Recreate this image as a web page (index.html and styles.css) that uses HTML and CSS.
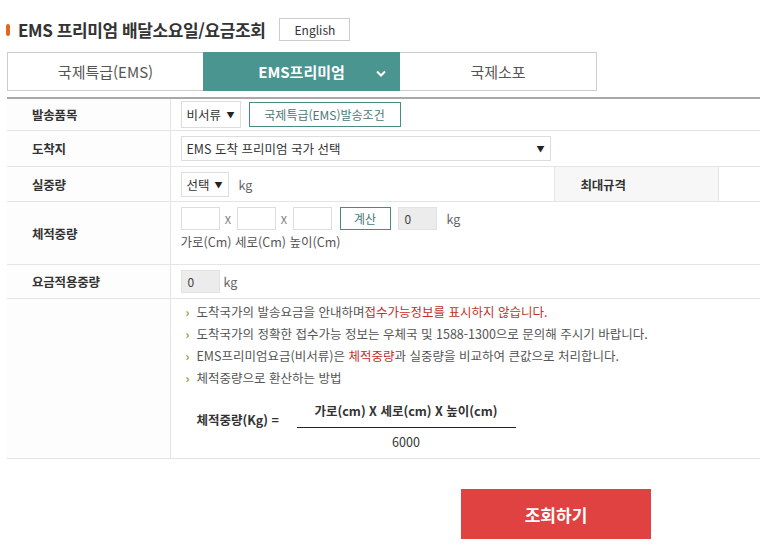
FILE: index.html
```html
<!DOCTYPE html>
<html lang="ko">
<head>
<meta charset="utf-8">
<title>EMS 프리미엄 배달소요일/요금조회</title>
<link rel="stylesheet" href="styles.css">
</head>
<body>
<header class="title-bar">
  <span class="bullet"></span>
  <h1>EMS 프리미엄 배달소요일/요금조회</h1>
  <button class="lang">English</button>
</header>
<nav class="tabs">
  <a class="tab tab-first">국제특급(EMS)</a>
  <a class="tab tab-active">EMS프리미엄
    <svg class="chev" width="10" height="7" viewBox="0 0 10 7"><polyline points="1,1.5 5,5.5 9,1.5" fill="none" stroke="#fff" stroke-width="2"/></svg>
  </a>
  <a class="tab tab-last">국제소포</a>
</nav>
<table class="calc">
  <colgroup><col class="c1"><col class="c2"><col class="c3"><col class="c4"></colgroup>
  <tr class="r1">
    <th>발송품목</th>
    <td colspan="3"><div class="inline">
      <span class="sel sel-doc">비서류 <i>▼</i></span>
      <button class="btn-outline btn-cond">국제특급(EMS)발송조건</button>
    </div></td>
  </tr>
  <tr class="r2">
    <th>도착지</th>
    <td colspan="3"><span class="sel sel-country">EMS 도착 프리미엄 국가 선택 <i>▼</i></span></td>
  </tr>
  <tr class="r3">
    <th>실중량</th>
    <td><div class="inline"><span class="sel sel-weight">선택 <i>▼</i></span><span class="unit">kg</span></div></td>
    <th class="sub">최대규격</th>
    <td class="blank"></td>
  </tr>
  <tr class="r4">
    <th>체적중량</th>
    <td colspan="3" class="dims-cell">
      <div class="inline dims">
        <span class="box"></span><span class="x">X</span>
        <span class="box"></span><span class="x">X</span>
        <span class="box"></span>
        <button class="btn-outline btn-calc">계산</button>
        <span class="box gray">0</span><span class="unit">kg</span>
      </div>
      <div class="dim-label">가로(Cm) 세로(Cm) 높이(Cm)</div>
    </td>
  </tr>
  <tr class="r5">
    <th>요금적용중량</th>
    <td colspan="3"><div class="inline"><span class="box gray">0</span><span class="unit unit-tight">kg</span></div></td>
  </tr>
  <tr class="r6">
    <th></th>
    <td colspan="3">
      <ul class="notes">
        <li>도착국가의 발송요금을 안내하며<em>접수가능정보를 표시하지 않습니다.</em></li>
        <li>도착국가의 정확한 접수가능 정보는 우체국 및 1588-1300으로 문의해 주시기 바랍니다.</li>
        <li>EMS프리미엄요금(비서류)은 <em>체적중량</em>과 실중량을 비교하여 큰값으로 처리합니다.</li>
        <li>체적중량으로 환산하는 방법</li>
      </ul>
      <div class="formula">
        <span class="f-left">체적중량(Kg) =</span>
        <div class="frac">
          <span class="num">가로(cm) X 세로(cm) X 높이(cm)</span>
          <span class="den">6000</span>
        </div>
      </div>
    </td>
  </tr>
</table>
<div class="actions">
  <button class="submit">조회하기</button>
</div>
</body>
</html>
```

FILE: styles.css
```css
html { overflow: hidden; }
body {
  margin: 0;
  font-family: "Noto Sans CJK KR", "Noto Sans", sans-serif;
  color: #555;
  font-size: 12px;
  background: #fff;
}
.title-bar {
  display: flex;
  align-items: center;
  padding: 18px 0 0 6px;
  height: 23px;
}
.bullet {
  width: 4px;
  height: 12px;
  border-radius: 2px;
  background: #e2681c;
  margin-right: 8px;
}
.title-bar h1 {
  margin: 0;
  font-size: 17px;
  font-weight: bold;
  color: #333;
  letter-spacing: -0.4px;
}
.lang {
  margin-left: 14px;
  width: 71px;
  height: 23px;
  border: 1px solid #ccc;
  background: #fff;
  font-family: inherit;
  font-size: 12px;
  color: #333;
  padding: 0;
}
.tabs {
  display: flex;
  margin: 11px 0 0 7px;
  width: 590px;
  height: 39px;
}
.tab {
  flex: 0 0 auto;
  display: flex;
  align-items: center;
  justify-content: center;
  box-sizing: border-box;
  height: 39px;
  font-size: 15px;
  color: #555;
  border-top: 1px solid #ccc;
  border-bottom: 1px solid #ccc;
}
.tab-first { width: 196px; border-left: 1px solid #ccc; }
.tab-last { width: 197px; border-right: 1px solid #ccc; }
.tab-active {
  width: 197px;
  background: #4a9590;
  border-color: #4a9590;
  color: #fff;
  font-weight: bold;
  position: relative;
}
.chev { position: absolute; right: 14px; top: 17px; }
.calc {
  margin: 6px 0 0 7px;
  width: 753px;
  border-collapse: collapse;
  table-layout: fixed;
  border-top: 2px solid #a8a8a8;
}
.c1 { width: 163px; }
.c2 { width: 384px; }
.c3 { width: 164px; }
.c4 { width: 42px; }
.calc th, .calc td {
  border-bottom: 1px solid #e4e4e4;
  padding: 0;
  vertical-align: middle;
}
.calc th {
  text-align: left;
  padding-left: 25px;
  font-size: 12.5px;
  font-weight: bold;
  color: #333;
  background: #fdfdfd;
  border-right: 1px solid #e4e4e4;
  letter-spacing: -0.2px;
}
.calc td { padding-left: 10px; }
.calc th.sub {
  background: #f7f7f7;
  border-left: 1px solid #e4e4e4;
  padding-left: 26px;
}
.calc td.blank { padding: 0; }
.r1 th, .r1 td { height: 31px; }
.r2 th, .r2 td { height: 35px; }
.r3 th, .r3 td { height: 34px; }
.r4 th, .r4 td { height: 57px; }
.r5 th, .r5 td { height: 33px; }
.r6 th, .r6 td { height: 159px; vertical-align: top; }
.inline { display: flex; align-items: center; }
.sel {
  display: inline-flex;
  align-items: center;
  justify-content: space-between;
  box-sizing: border-box;
  border: 1px solid #ddd;
  background: #fff;
  color: #333;
  font-size: 12.5px;
  padding: 0 5px;
}
.sel i { font-style: normal; font-size: 8px; color: #222; }
.sel-doc { width: 60px; height: 27px; }
.sel-country { width: 370px; height: 25px; }
.sel-weight { width: 48px; height: 25px; }
.btn-outline {
  box-sizing: border-box;
  border: 1px solid #4a8a86;
  background: #fff;
  color: #4a7a78;
  font-family: inherit;
  font-size: 12px;
  padding: 0;
}
.btn-cond { width: 152px; height: 25px; margin-left: 8px; }
.unit { margin-left: 10px; color: #666; font-size: 12.5px; }
.unit-tight { margin-left: 4px; }
.box {
  box-sizing: border-box;
  width: 39px;
  height: 23px;
  border: 1px solid #ddd;
  background: #fff;
  font-size: 12px;
  color: #444;
  padding-left: 6px;
  line-height: 21px;
}
.box.gray { background: #ececec; border-color: #e2e2e2; }
.x { width: 17px; text-align: center; color: #777; font-size: 11px; }
.btn-calc { width: 51px; height: 23px; margin: 0 7px 0 8px; }
.calc td.dims-cell { vertical-align: top; padding-top: 5px; }
.dim-label { margin-top: 3px; font-size: 12.5px; color: #555; line-height: 17px; }
.notes {
  list-style: none;
  margin: 2px 0 0 0;
  padding: 0;
}
.notes li {
  line-height: 22px;
  font-size: 12.5px;
  color: #555;
  position: relative;
  padding-left: 16px;
}
.notes li::before {
  content: "›";
  position: absolute;
  left: 5px;
  top: 0;
  color: #8a9a2a;
  font-weight: bold;
  font-size: 12px;
}
.notes em { font-style: normal; color: #c3302c; }
.formula {
  display: flex;
  align-items: flex-start;
  margin: 12px 0 0 16px;
}
.f-left {
  font-weight: bold;
  color: #333;
  font-size: 12.5px;
  margin-top: 9px;
  width: 100px;
}
.frac {
  display: flex;
  flex-direction: column;
  align-items: center;
  width: 219px;
}
.num {
  font-weight: bold;
  color: #333;
  font-size: 12.5px;
  padding-bottom: 7px;
  border-bottom: 1px solid #222;
  width: 100%;
  text-align: center;
}
.den { margin-top: 4px; color: #333; font-size: 12.5px; }
.actions { padding: 30px 0 0 461px; }
.submit {
  width: 190px;
  height: 50px;
  background: #e04141;
  border: 0;
  color: #fff;
  font-family: inherit;
  font-size: 17px;
  font-weight: bold;
}
```
